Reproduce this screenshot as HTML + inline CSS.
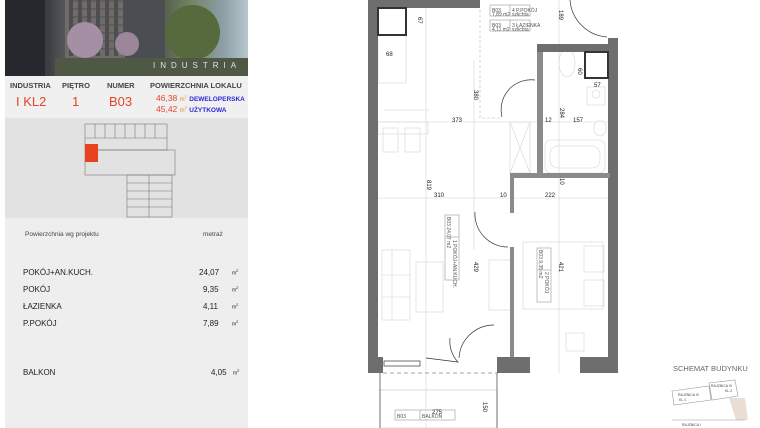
<!DOCTYPE html>
<html><head><meta charset="utf-8"><style>
*{margin:0;padding:0;box-sizing:border-box}
body{width:760px;height:428px;background:#fff;font-family:"Liberation Sans",sans-serif;position:relative;overflow:hidden}
.lp{position:absolute;left:5px;top:0;width:243px;height:428px;background:#eeeeee}
.img{position:absolute;left:0;top:0;width:243px;height:76px;overflow:hidden;background:linear-gradient(90deg,#2a2e33 0%,#3b3f44 18%,#6d6a6a 30%,#8a8580 45%,#4d5448 62%,#6f8060 75%,#8da0a8 90%,#b8c6cc 100%)}
.hdr{position:absolute;top:76px;left:0;width:243px;height:42px;background:#f0f0f0}
.map{position:absolute;top:118px;left:0;width:243px;height:100px;background:#e2e2e2}
.t{position:absolute;font-size:8px;color:#222;white-space:nowrap}
.h{font-weight:bold;font-size:7.5px;color:#444}
.r{color:#e2452b}
.b{color:#2a2ad8;font-weight:bold;font-size:6.5px}
sup{font-size:4px}
.win{position:absolute;background:repeating-linear-gradient(90deg,#3a3c40 0 4px,transparent 4px 9px),repeating-linear-gradient(0deg,transparent 0 6px,#55575a 6px 8px)}
</style></head><body>
<div class="lp">
 <div class="img">
  <div style="position:absolute;left:0;top:0;width:40px;height:76px;background:#25292d"></div>
  <div style="position:absolute;left:60px;top:0;width:100px;height:60px;background:#6e6b69"></div>
  <div class="win" style="left:64px;top:0;width:92px;height:56px;opacity:.6"></div>
  <div style="position:absolute;left:120px;top:0;width:40px;height:60px;background:#4a4d52"></div>
  <div style="position:absolute;left:62px;top:22px;width:36px;height:36px;border-radius:50%;background:#a58fa5"></div>
  <div style="position:absolute;left:110px;top:32px;width:24px;height:24px;border-radius:50%;background:#9b8799"></div>
  <div style="position:absolute;left:160px;top:5px;width:55px;height:55px;border-radius:50%;background:#566a3e"></div>
  <div style="position:absolute;left:50px;top:58px;width:193px;height:18px;background:#4f5745"></div>
  <div style="position:absolute;left:148px;top:61px;font-size:8px;letter-spacing:5px;color:#dfe3e6">INDUSTRIA</div>
 </div>
 <div class="hdr"></div>
 <div class="t h" style="left:5px;top:81px">INDUSTRIA</div>
 <div class="t h" style="left:57px;top:81px">PIĘTRO</div>
 <div class="t h" style="left:102px;top:81px">NUMER</div>
 <div class="t h" style="left:145px;top:81px">POWIERZCHNIA LOKALU</div>
 <div class="t r" style="left:11px;top:94px;font-size:13px">I KL2</div>
 <div class="t r" style="left:67px;top:94px;font-size:13px">1</div>
 <div class="t r" style="left:104px;top:94px;font-size:13px">B03</div>
 <div class="t r" style="left:151px;top:93px;font-size:8.5px">46,38 <span style="font-size:6px;color:#e8902b">m<sup>2</sup></span> <span class="b">DEWELOPERSKA</span></div>
 <div class="t r" style="left:151px;top:104px;font-size:8.5px">45,42 <span style="font-size:6px;color:#e8902b">m<sup>2</sup></span> <span class="b">UŻYTKOWA</span></div>
 <div class="map">
  <svg width="243" height="100" style="position:absolute;left:0;top:0">
   <g fill="none" stroke="#777" stroke-width="0.6">
    <rect x="80" y="6" width="82" height="26"/><path d="M90 6v14M100 6v14M110 6v14M120 6v14M130 6v14M140 6v14M150 6v14M80 20h82"/>
    <rect x="80" y="32" width="90" height="25"/>
    <rect x="122" y="57" width="45" height="42"/><path d="M122 65h45M122 73h45M122 81h45M122 89h45M144 57v42"/>
   </g>
   <rect x="80" y="26" width="13" height="18" fill="#e8411f"/>
  </svg>
 </div>
 <div class="t" style="left:20px;top:231px;font-size:6.5px;color:#444">Powierzchnia wg projektu</div>
 <div class="t" style="left:198px;top:231px;font-size:6.5px;color:#444">metraż</div>
 <div class="t" style="left:18px;top:268px">POKÓJ+AN.KUCH.</div><div class="t" style="left:194px;top:268px">24,07</div><div class="t" style="left:227px;top:268px;font-size:5px">m<sup>2</sup></div>
 <div class="t" style="left:18px;top:285px">POKÓJ</div><div class="t" style="left:198px;top:285px">9,35</div><div class="t" style="left:227px;top:285px;font-size:5px">m<sup>2</sup></div>
 <div class="t" style="left:18px;top:302px">ŁAZIENKA</div><div class="t" style="left:198px;top:302px">4,11</div><div class="t" style="left:227px;top:302px;font-size:5px">m<sup>2</sup></div>
 <div class="t" style="left:18px;top:319px">P.POKÓJ</div><div class="t" style="left:198px;top:319px">7,89</div><div class="t" style="left:227px;top:319px;font-size:5px">m<sup>2</sup></div>
 <div class="t" style="left:18px;top:368px">BALKON</div><div class="t" style="left:206px;top:368px">4,05</div><div class="t" style="left:228px;top:368px;font-size:5px">m<sup>2</sup></div>
</div>
<svg width="760" height="428" style="position:absolute;left:0;top:0" font-family="Liberation Sans" font-size="6">
 <g stroke="#d4d4d4" stroke-width="0.6" fill="none">
  <path d="M426 0V428M474 60V250M559 0V373M378 122H608M378 198H608M384 110H430M378 390H497"/>
  <rect x="378" y="28" width="28" height="55"/>
  <rect x="378" y="122" width="50" height="12"/>
  <rect x="383" y="128" width="15" height="24"/><rect x="405" y="128" width="15" height="24"/>
  <rect x="382" y="250" width="28" height="70"/><path d="M382 275h28M382 297h28M392 250v70"/>
  <rect x="416" y="262" width="27" height="50"/>
  <rect x="489" y="260" width="22" height="50"/>
  <rect x="523" y="242" width="80" height="67"/><rect x="584" y="246" width="20" height="26"/><rect x="584" y="280" width="20" height="26"/>
  <rect x="566" y="333" width="18" height="18"/>
  <rect x="545" y="140" width="60" height="33" rx="6"/>
  <rect x="550" y="146" width="50" height="22" rx="8"/>
  <ellipse cx="567" cy="63" rx="8" ry="14"/>
  <rect x="587" y="87" width="18" height="18"/><circle cx="596" cy="94" r="4"/>
  <ellipse cx="600" cy="128" rx="6" ry="8"/>
  <path d="M510 122L530 173M530 122L510 173"/><rect x="510" y="122" width="20" height="51"/>
  <rect x="380" y="390" width="117" height="38"/>
 </g>
 <g stroke="#bbb" stroke-width="0.6" fill="none" stroke-dasharray="3 2">
  <path d="M480 10V118H500"/>
 </g>
 <g stroke="#999" stroke-width="0.6" fill="none">
  <rect x="490" y="5" width="40" height="11"/><path d="M510 5v11"/>
  <rect x="490" y="20" width="40" height="11"/><path d="M510 20v11"/>
  <rect x="445" y="215" width="14" height="65"/><path d="M445 237h14"/>
  <rect x="537" y="248" width="14" height="54"/><path d="M537 270h14"/>
  <rect x="395" y="410" width="60" height="10"/><path d="M420 410v10"/>
 </g>
 <g stroke="#333" stroke-width="0.7" fill="none">
  <path d="M535 80A30 30 0 0 0 502 117"/>
  <path d="M475 212A33 33 0 0 0 508 247"/>
  <path d="M494 325A35 35 0 0 0 459 358"/>
  <path d="M450 338A30 30 0 0 0 458 362L426 358"/>
  <path d="M570 0A40 40 0 0 0 607 37"/>
  <rect x="384" y="361" width="36" height="5"/>
 </g>
 <path d="M383 373H497" stroke="#888" stroke-width="0.8" stroke-dasharray="4 3"/>
 <path d="M380 373V428M497 373V428" stroke="#555" stroke-width="0.8"/>
 <g fill="#6e6e6e">
  <rect x="368" y="0" width="10" height="373"/>
  <rect x="368" y="0" width="112" height="8"/>
  <rect x="537" y="44" width="81" height="8"/>
  <rect x="608" y="38" width="10" height="335"/>
  <rect x="368" y="357" width="15" height="16"/>
  <rect x="497" y="357" width="33" height="16"/>
  <rect x="580" y="357" width="38" height="16"/>
  <rect x="537" y="52" width="6" height="123" fill="#8a8a8a"/>
  <rect x="510" y="173" width="100" height="5" fill="#8a8a8a"/>
  <rect x="510" y="173" width="4" height="40" fill="#8a8a8a"/>
  <rect x="510" y="247" width="4" height="110" fill="#8a8a8a"/>
 </g>
 <rect x="378" y="8" width="28" height="27" fill="#fff" stroke="#333" stroke-width="2"/>
 <rect x="585" y="52" width="23" height="26" fill="#fff" stroke="#333" stroke-width="2"/>
 <g fill="#222" font-size="6">
  <text x="386" y="56">68</text><text x="452" y="122">373</text><text x="545" y="122">12</text><text x="573" y="122">157</text>
  <text x="434" y="197">310</text><text x="500" y="197">10</text><text x="545" y="197">222</text>
  <text x="594" y="87">57</text><text x="432" y="414">275</text>
  <text transform="translate(418,17) rotate(90)">67</text>
  <text transform="translate(474,90) rotate(90)">380</text>
  <text transform="translate(560,108) rotate(90)">284</text>
  <text transform="translate(560,178) rotate(90)">10</text>
  <text transform="translate(427,180) rotate(90)">819</text>
  <text transform="translate(474,262) rotate(90)">429</text>
  <text transform="translate(559,262) rotate(90)">421</text>
  <text transform="translate(483,402) rotate(90)">150</text>
  <text transform="translate(559,10) rotate(90)">189</text>
  <text transform="translate(578,68) rotate(90)">60</text>
 </g>
 <g fill="#555" font-size="5">
  <text x="492" y="12">B03</text><text x="512" y="12">4 P.POKÓJ</text>
  <text x="492" y="16">7,89 m2</text><text x="512" y="16">szlichta</text>
  <text x="492" y="27">B03</text><text x="512" y="27">3 ŁAZIENKA</text>
  <text x="492" y="31">4,11 m2</text><text x="512" y="31">szlichta</text>
  <text x="397" y="418">B03</text><text x="422" y="418">BALKON</text>
  <text transform="translate(447,217) rotate(90)">B03  24,07 m2</text>
  <text transform="translate(453,240) rotate(90)">1 POKÓJ+AN.KUCH.</text>
  <text transform="translate(539,250) rotate(90)">B03  9,35 m2</text>
  <text transform="translate(545,272) rotate(90)">2 POKÓJ</text>
 </g>
 <text x="673" y="371" font-size="7.5" fill="#666">SCHEMAT BUDYNKU</text>
 <g stroke="#999" stroke-width="0.6" fill="none">
  <path d="M672 391L709 386L711 400L674 405Z"/>
  <path d="M709 383L735 380L738 396L712 400Z"/>
  <path d="M729 398L745 398L748 420L736 420Z" fill="#eadfd2" stroke="none"/>
  <path d="M672 420H745"/>
 </g>
 <g font-size="3.5" fill="#444">
  <text x="678" y="396">RAJZNICA IV</text><text x="679" y="401">KL 1</text>
  <text x="711" y="387">RAJZNICA IV</text><text x="725" y="392">KL 2</text>
  <text x="682" y="426">RAJZNICA I</text>
 </g>
</svg>
</body></html>
